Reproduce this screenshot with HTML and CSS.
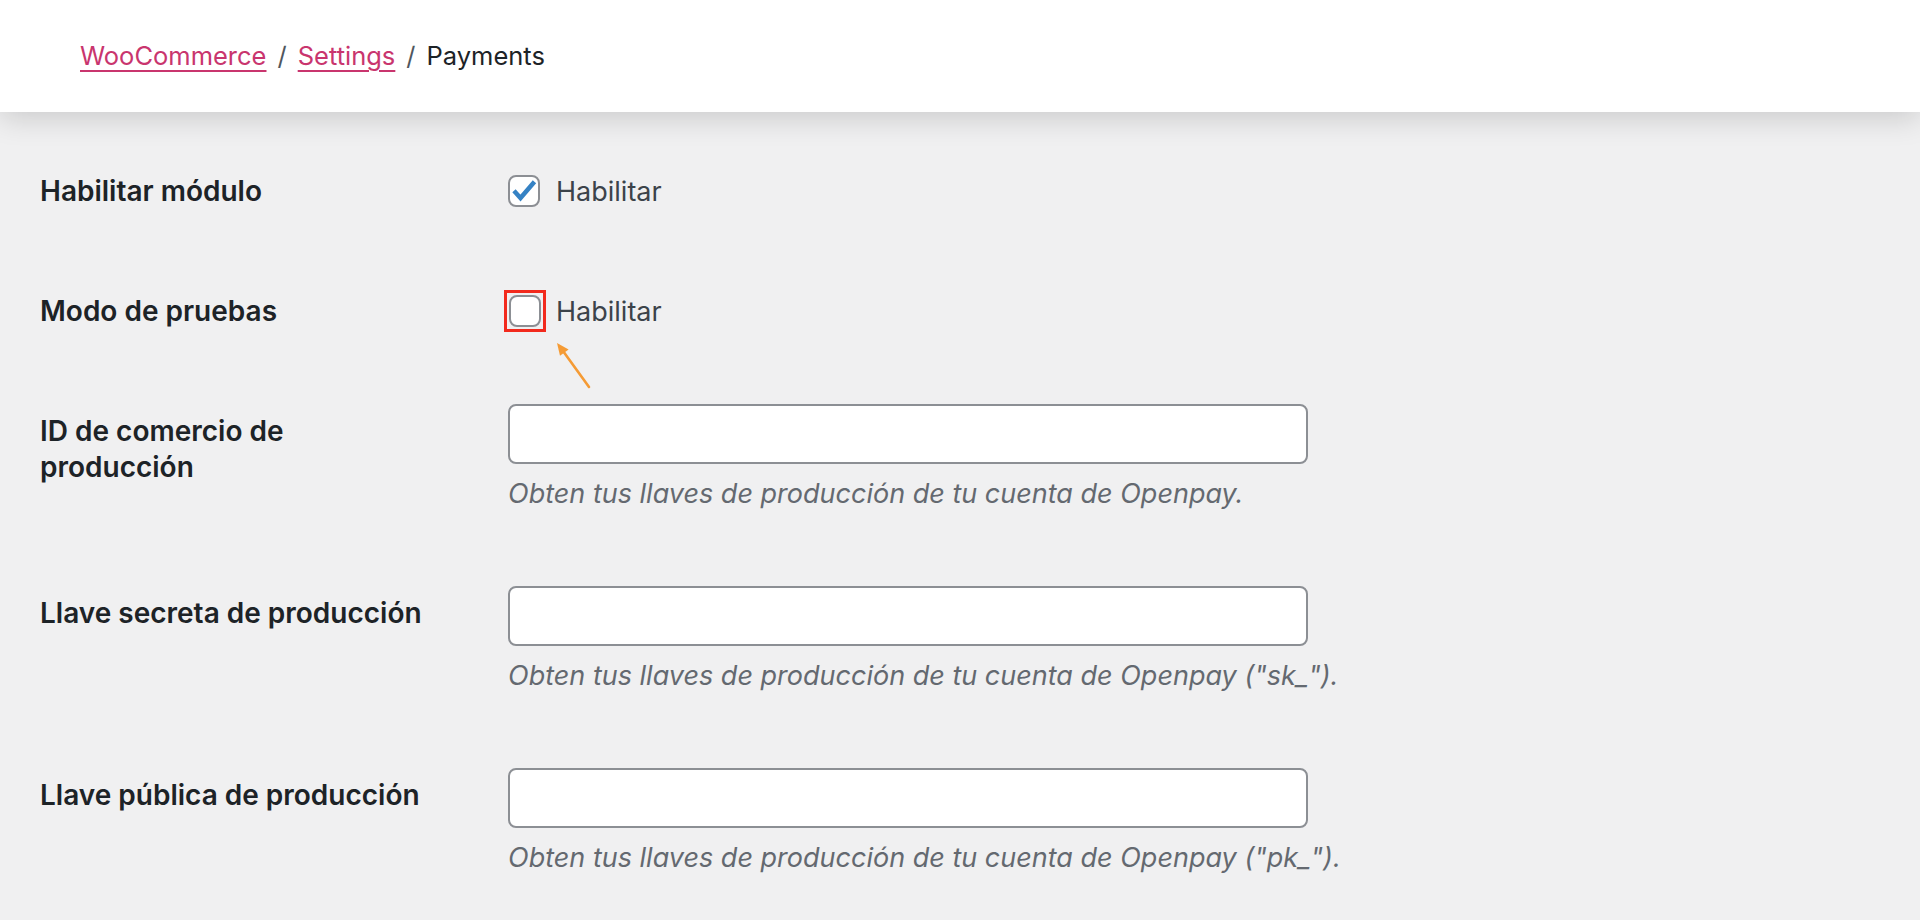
FILE: index.html
```html
<!DOCTYPE html>
<html lang="es">
<head>
<meta charset="utf-8">
<title>Payments</title>
<link rel="stylesheet" href="styles.css">
</head>
<body>
<header class="topbar">
  <nav class="crumbs">
    <a href="#" class="crumb-link">WooCommerce</a>
    <span class="sep">/</span>
    <a href="#" class="crumb-link">Settings</a>
    <span class="sep">/</span>
    <span class="crumb-current">Payments</span>
  </nav>
</header>

<main class="settings">
  <div class="row row-check">
    <div class="label">Habilitar módulo</div>
    <div class="field">
      <label class="check">
        <span class="box checked">
          <svg viewBox="0 0 32 32" width="32" height="32"><path d="M7.5 17.5 L12.5 23 L25 8.5" fill="none" stroke="#3582c4" stroke-width="4.5" stroke-linecap="square" stroke-linejoin="miter"/></svg>
        </span>
        <span class="check-text">Habilitar</span>
      </label>
    </div>
  </div>

  <div class="row row-check">
    <div class="label">Modo de pruebas</div>
    <div class="field">
      <label class="check">
        <span class="highlight"><span class="box"></span></span>
        <span class="check-text">Habilitar</span>
      </label>
      <svg class="arrow" viewBox="0 0 44 56" width="44" height="56">
        <line x1="37" y1="50" x2="11" y2="14" stroke="#f59b35" stroke-width="2.6" stroke-linecap="round"/>
        <polygon points="5,6 16.6,12.6 8,18.8" fill="#f59b35"/>
      </svg>
    </div>
  </div>

  <div class="row row-input">
    <div class="label">ID de comercio de<br>producción</div>
    <div class="field">
      <input type="text" class="text-input">
      <p class="description">Obten tus llaves de producción de tu cuenta de Openpay.</p>
    </div>
  </div>

  <div class="row row-input">
    <div class="label">Llave secreta de producción</div>
    <div class="field">
      <input type="text" class="text-input">
      <p class="description">Obten tus llaves de producción de tu cuenta de Openpay ("sk_").</p>
    </div>
  </div>

  <div class="row row-input">
    <div class="label">Llave pública de producción</div>
    <div class="field">
      <input type="text" class="text-input">
      <p class="description">Obten tus llaves de producción de tu cuenta de Openpay ("pk_").</p>
    </div>
  </div>
</main>
</body>
</html>
```

FILE: styles.css
```css
html, body {
  margin: 0;
  padding: 0;
}
body {
  background: #f0f0f1;
  font-family: Inter, "Liberation Sans", sans-serif;
  color: #1d2327;
  overflow: hidden;
  height: 920px;
}
.topbar {
  height: 112px;
  background: #ffffff;
  box-shadow: 0 6px 28px rgba(0, 0, 0, 0.16);
  display: flex;
  align-items: center;
  padding-left: 80px;
  position: relative;
  z-index: 2;
}
.crumbs {
  font-size: 25.5px;
  display: flex;
  align-items: baseline;
  margin-top: -1px;
}
.crumb-link {
  color: #c9356e;
  text-decoration: underline;
  text-decoration-thickness: 2px;
  text-underline-offset: 5px;
}
.sep {
  color: #50575e;
  margin: 0 11px;
}
.crumb-current {
  color: #1d2327;
}
.settings {
  padding: 19px 0 0 40px;
}
.row {
  display: grid;
  grid-template-columns: 468px 1fr;
}
.row-check {
  height: 120px;
}
.row-input {
  height: 182px;
}
.label {
  padding-top: 42px;
  font-weight: 600;
  font-size: 28px;
  line-height: 36px;
  color: #1d2327;
}
.field {
  position: relative;
}
.row-check .field {
  padding-top: 44px;
}
.row-input .field {
  padding-top: 33px;
}
.check {
  display: flex;
  align-items: center;
  height: 32px;
}
.box {
  box-sizing: border-box;
  width: 32px;
  height: 32px;
  border: 2px solid #8c8f94;
  border-radius: 8px;
  background: #fff;
  display: flex;
  align-items: center;
  justify-content: center;
}
.box svg {
  display: block;
  margin: -2px;
}
.highlight {
  box-sizing: border-box;
  margin: -5px 0 -5px -4px;
  border: 3px solid #f22a1d;
  width: 42px;
  height: 42px;
  display: flex;
  align-items: center;
  justify-content: center;
}
.highlight + .check-text {
  margin-left: 10px;
}
.check-text {
  margin-left: 16px;
  font-size: 27px;
  color: #3c434a;
}
.arrow {
  position: absolute;
  left: 44px;
  top: 86px;
}
.text-input {
  display: block;
  box-sizing: border-box;
  width: 800px;
  height: 60px;
  margin: 0;
  border: 2px solid #8c8f94;
  border-radius: 8px;
  background: #fff;
  padding: 0 16px;
  font-size: 26px;
}
.description {
  margin: 9px 0 0 0;
  font-size: 27px;
  line-height: 42px;
  font-style: italic;
  color: #646970;
}
```
